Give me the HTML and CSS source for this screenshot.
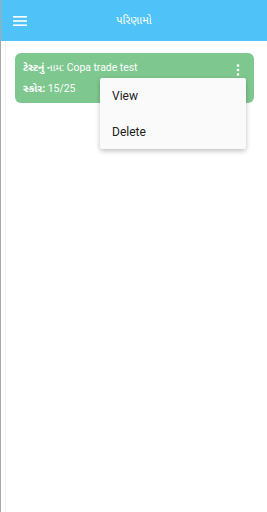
FILE: index.html
```html
<!DOCTYPE html>
<html>
<head>
  <title>પરિણામો</title>
  <link rel="stylesheet" href="styles.css">
</head>
<body>
  <div class="screen">
    <div class="app-bar">
      <svg class="menu-icon" viewBox="0 0 14 10" xmlns="http://www.w3.org/2000/svg">
        <rect x="0" y="0" width="14" height="1.6" fill="#fff"/>
        <rect x="0" y="4.2" width="14" height="1.6" fill="#fff"/>
        <rect x="0" y="8.4" width="14" height="1.6" fill="#fff"/>
      </svg>
      <div class="title">પરિણામો</div>
    </div>

    <div class="content">
      <div class="result-card">
        <div class="card-lines">
          <div class="line"><b>ટેસ્ટનું</b> નામ: Copa trade test</div>
          <div class="line"><b>સ્કોર:</b> 15/25</div>
        </div>
        <svg class="more-icon" viewBox="0 0 4 12" xmlns="http://www.w3.org/2000/svg">
          <circle cx="2" cy="1.5" r="1.3" fill="#fff"/>
          <circle cx="2" cy="6" r="1.3" fill="#fff"/>
          <circle cx="2" cy="10.5" r="1.3" fill="#fff"/>
        </svg>

        <div class="popup-menu">
          <div class="menu-item">View</div>
          <div class="menu-item">Delete</div>
        </div>
      </div>
    </div>
  </div>
</body>
</html>
```

FILE: styles.css
```css
* {
  margin: 0;
  padding: 0;
  box-sizing: border-box;
}

body {
  width: 267px;
  height: 512px;
  background: #ffffff;
  font-family: Roboto, "Noto Sans Gujarati", "Noto Sans", sans-serif;
  overflow: hidden;
}

.screen {
  height: 512px;
  border-left: 1px solid #a8a8a8;
  display: flex;
  flex-direction: column;
}

.app-bar {
  height: 41px;
  background: #4fc3f7;
  display: flex;
  align-items: center;
  padding-left: 12px;
  position: relative;
}

.menu-icon {
  width: 14px;
  height: 10px;
}

.title {
  position: absolute;
  left: 0;
  right: 0;
  text-align: center;
  color: #ffffff;
  font-size: 11px;
}

.content {
  flex: 1;
  padding: 12px 13px 0 14px;
  border-left: 1px solid #f0f0f0;
  margin-left: 4px;
}

.result-card {
  position: relative;
  height: 50px;
  margin-left: -5px;
  background: #7ec88f;
  border-radius: 6px;
  display: flex;
  justify-content: space-between;
  padding: 8px 14px 0 8px;
  color: #ffffff;
}

.card-lines {
  display: flex;
  flex-direction: column;
  gap: 7px;
}

.line {
  font-size: 10.4px;
  line-height: 14px;
}

.line b {
  font-weight: 700;
}

.more-icon {
  width: 4px;
  height: 12px;
  margin-top: 3px;
}

.popup-menu {
  position: absolute;
  top: 25px;
  left: 85px;
  width: 146px;
  height: 71px;
  background: #fafafa;
  border-radius: 2px;
  box-shadow: 0 2px 5px rgba(0, 0, 0, 0.25);
  display: flex;
  flex-direction: column;
  padding-top: 8px;
  color: #212121;
}

.menu-item {
  font-size: 12px;
  line-height: 18px;
  padding: 1px 12px;
  margin-bottom: 16px;
}
```
